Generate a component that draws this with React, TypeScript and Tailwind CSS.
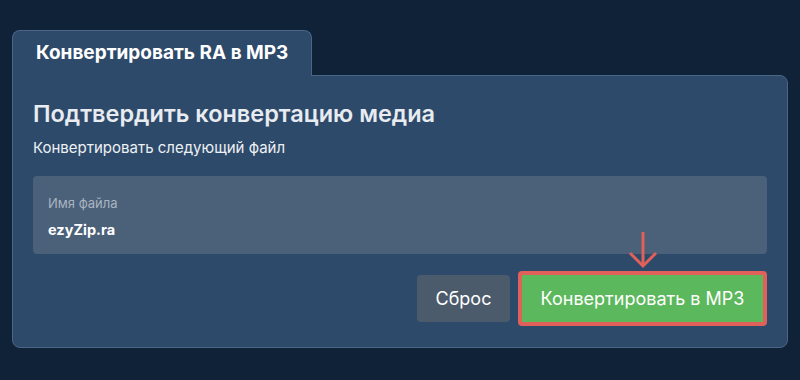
import React from 'react';

function DownArrow() {
  return (
    <svg
      className="absolute left-1/2 -translate-x-1/2 -top-[40px]"
      width="30"
      height="38"
      viewBox="0 0 30 38"
      fill="none"
      stroke="#e0605a"
      strokeWidth="3"
    >
      <path d="M15 1 V35" />
      <path d="M2 22 L15 35 L28 22" />
    </svg>
  );
}

export default function App() {
  return (
    <div
      className="min-h-[380px] w-full bg-[#0f2238] px-[12px] pt-[30px]"
      style={{ fontFamily: 'Inter, "Noto Sans", sans-serif' }}
    >
      <div className="relative z-10 -mb-px flex h-[46px] w-[300px] items-center rounded-t-lg border border-b-0 border-[#4b6586] bg-[#2d4a6b] pl-[23px]">
        <span className="whitespace-nowrap text-[19px] font-bold text-white">
          Конвертировать RA в MP3
        </span>
      </div>

      <div className="rounded-b-lg rounded-tr-lg border border-[#4b6586] bg-[#2d4a6b] px-[20px] pb-[21px] pt-[22px]">
        <h1 className="text-[23.5px] font-semibold leading-[32px] text-[#e8ecf0]">
          Подтвердить конвертацию медиа
        </h1>
        <p className="mt-[8px] text-[15px] leading-[20px] text-[#eef1f4]">Конвертировать следующий файл</p>

        <div className="mt-[18px] flex h-[78px] flex-col justify-center rounded-[4px] bg-[#4b6079] px-[15px] pt-[5px]">
          <div className="text-[13px] text-[#a9b4c1]">Имя файла</div>
          <div className="mt-[6px] text-[14.5px] font-bold text-white">ezyZip.ra</div>
        </div>

        <div className="mt-[17px] flex items-center justify-end gap-[8px]">
          <button className="h-[47px] w-[93px] rounded-[4px] bg-[#4c5b6c] text-[18px] text-white">
            Сброс
          </button>
          <div className="relative">
            <DownArrow />
            <button className="h-[55px] w-[249px] rounded-[4px] border-[4px] border-[#e0605a] bg-[#5cb85c] text-[18px] text-white">
              Конвертировать в MP3
            </button>
          </div>
        </div>
      </div>
    </div>
  );
}
